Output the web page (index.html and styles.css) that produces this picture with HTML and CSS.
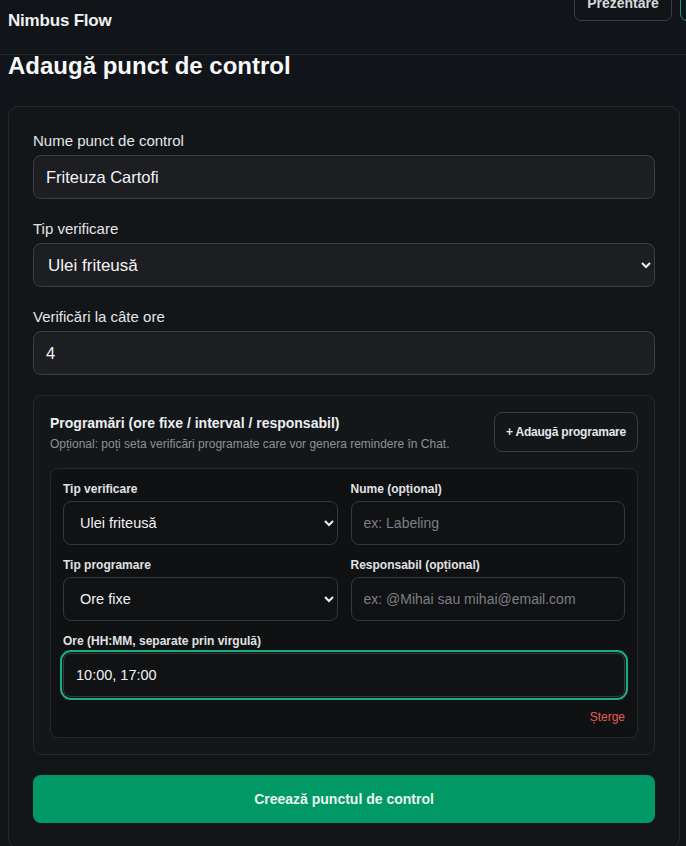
FILE: index.html
```html
<!DOCTYPE html>
<html lang="ro">
<head>
<meta charset="utf-8">
<title>Nimbus Flow</title>
<link rel="stylesheet" href="styles.css">
</head>
<body>
<header class="topbar">
  <div class="brand">Nimbus Flow</div>
  <nav class="topnav">
    <button class="nav-btn">Prezentare</button>
    <button class="nav-btn nav-btn-accent">Ieșire</button>
  </nav>
</header>
<main class="page">
  <h1 class="page-title">Adaugă punct de control</h1>
  <form class="card">
    <div class="field">
      <label class="label">Nume punct de control</label>
      <input class="input" type="text" value="Friteuza Cartofi">
    </div>
    <div class="field">
      <label class="label">Tip verificare</label>
      <select class="input select"><option>Ulei friteusă</option></select>
    </div>
    <div class="field">
      <label class="label">Verificări la câte ore</label>
      <input class="input" type="text" value="4">
    </div>
    <section class="schedules">
      <div class="sched-head">
        <div class="sched-text">
          <div class="sched-title">Programări (ore fixe / interval / responsabil)</div>
          <div class="sched-sub">Opțional: poți seta verificări programate care vor genera remindere în Chat.</div>
        </div>
        <button type="button" class="add-btn">+ Adaugă programare</button>
      </div>
      <div class="sched-item">
        <div class="grid">
          <div class="sfield">
            <label class="slabel">Tip verificare</label>
            <select class="sinput select"><option>Ulei friteusă</option></select>
          </div>
          <div class="sfield">
            <label class="slabel">Nume (opțional)</label>
            <input class="sinput" type="text" placeholder="ex: Labeling">
          </div>
          <div class="sfield">
            <label class="slabel">Tip programare</label>
            <select class="sinput select"><option>Ore fixe</option></select>
          </div>
          <div class="sfield">
            <label class="slabel">Responsabil (opțional)</label>
            <input class="sinput" type="text" placeholder="ex: @Mihai sau mihai@email.com">
          </div>
          <div class="sfield span2">
            <label class="slabel">Ore (HH:MM, separate prin virgulă)</label>
            <input class="sinput focused" type="text" value="10:00, 17:00">
          </div>
        </div>
        <div class="item-actions"><button type="button" class="del-btn">Șterge</button></div>
      </div>
    </section>
    <button type="button" class="submit">Creează punctul de control</button>
  </form>
</main>
</body>
</html>
```
FILE: styles.css
```css
* { box-sizing: border-box; }
html, body { margin: 0; overflow: hidden; }
body {
  background: #111418;
  color: #e6e7ea;
  font-family: "Liberation Sans", Arial, sans-serif;
  color-scheme: dark;
}
button, input, select { font-family: inherit; }

.topbar {
  height: 55px;
  border-bottom: 1px solid #262a30;
  display: flex;
  justify-content: space-between;
  align-items: flex-start;
  padding-left: 8px;
  overflow: hidden;
}
.brand {
  font-size: 17px;
  font-weight: 700;
  color: #eef0f2;
  margin-top: 10px;
  line-height: 22px;
  letter-spacing: -0.2px;
}
.topnav {
  display: flex;
  gap: 8px;
  margin-top: -15px;
  margin-right: -92px;
}
.nav-btn {
  height: 36px;
  padding: 0 12px;
  border: 1px solid #3a3e44;
  border-radius: 7px;
  background: transparent;
  color: #d6d8dc;
  font-size: 14px;
  font-weight: 700;
  width: 98px;
}
.nav-btn-accent { border-color: #119f72; }

.page { padding: 0 6px 0 8px; }
.page-title {
  margin: -4px 0 0;
  font-size: 24px;
  line-height: 30px;
  font-weight: 700;
  color: #f7f8f9;
}
.card {
  margin-top: 25px;
  border: 1px solid #262a30;
  border-radius: 10px;
  background: #131619;
  padding: 24px;
  display: flex;
  flex-direction: column;
  gap: 20px;
}
.field { display: flex; flex-direction: column; gap: 4px; }
.label {
  font-size: 15px;
  line-height: 20px;
  color: #e3e5e8;
}
.input {
  height: 44px;
  border: 1px solid #3b3e44;
  border-radius: 8px;
  background: #1c1e22;
  color: #f2f3f5;
  font-size: 16.5px;
  padding: 0 12px;
}
.select { padding-left: 10px; font-size: 17px; }

.schedules {
  border: 1px solid #25282d;
  border-radius: 8px;
  background: #14171a;
  padding: 16px;
}
.sched-head {
  display: flex;
  justify-content: space-between;
  align-items: flex-start;
  gap: 12px;
}
.sched-title {
  font-size: 14px;
  line-height: 20px;
  font-weight: 700;
  color: #eceef0;
  margin-top: 1px;
}
.sched-sub {
  font-size: 12px;
  line-height: 16px;
  color: #8c9197;
  margin-top: 3px;
}
.add-btn {
  height: 40px;
  padding: 0 10px;
  border: 1px solid #3a3e44;
  border-radius: 8px;
  background: transparent;
  color: #e6e7ea;
  font-size: 12px;
  font-weight: 700;
  letter-spacing: -0.2px;
  white-space: nowrap;
  width: 144px;
  flex-shrink: 0;
}
.sched-item {
  margin-top: 16px;
  border: 1px solid #25282d;
  border-radius: 8px;
  background: #0f1113;
  padding: 12px;
}
.grid {
  display: grid;
  grid-template-columns: 1fr 1fr;
  column-gap: 13px;
  row-gap: 12px;
}
.span2 { grid-column: span 2; }
.sfield { display: flex; flex-direction: column; gap: 4px; }
.slabel {
  font-size: 12px;
  line-height: 16px;
  font-weight: 700;
  color: #e0e2e5;
}
.sinput {
  height: 44px;
  border: 1px solid #34373c;
  border-radius: 8px;
  background: #111214;
  color: #f0f1f3;
  font-size: 14.5px;
  padding: 0 12px;
}
.sinput.select { padding-left: 12px; font-size: 14.5px; }
.sinput::placeholder { color: #7b7f86; font-size: 14px; }
.sinput.focused {
  outline: none;
  box-shadow: 0 0 0 1px #111214, 0 0 0 3px #16b07c;
}
.item-actions {
  display: flex;
  justify-content: flex-end;
  margin-top: 12px;
}
.del-btn {
  border: 0;
  background: transparent;
  padding: 0;
  color: #e35d4f;
  font-size: 12px;
  line-height: 16px;
}
.submit {
  height: 48px;
  border: 0;
  border-radius: 8px;
  background: #009966;
  color: #e9f6f0;
  font-size: 14px;
  font-weight: 700;
}
```
